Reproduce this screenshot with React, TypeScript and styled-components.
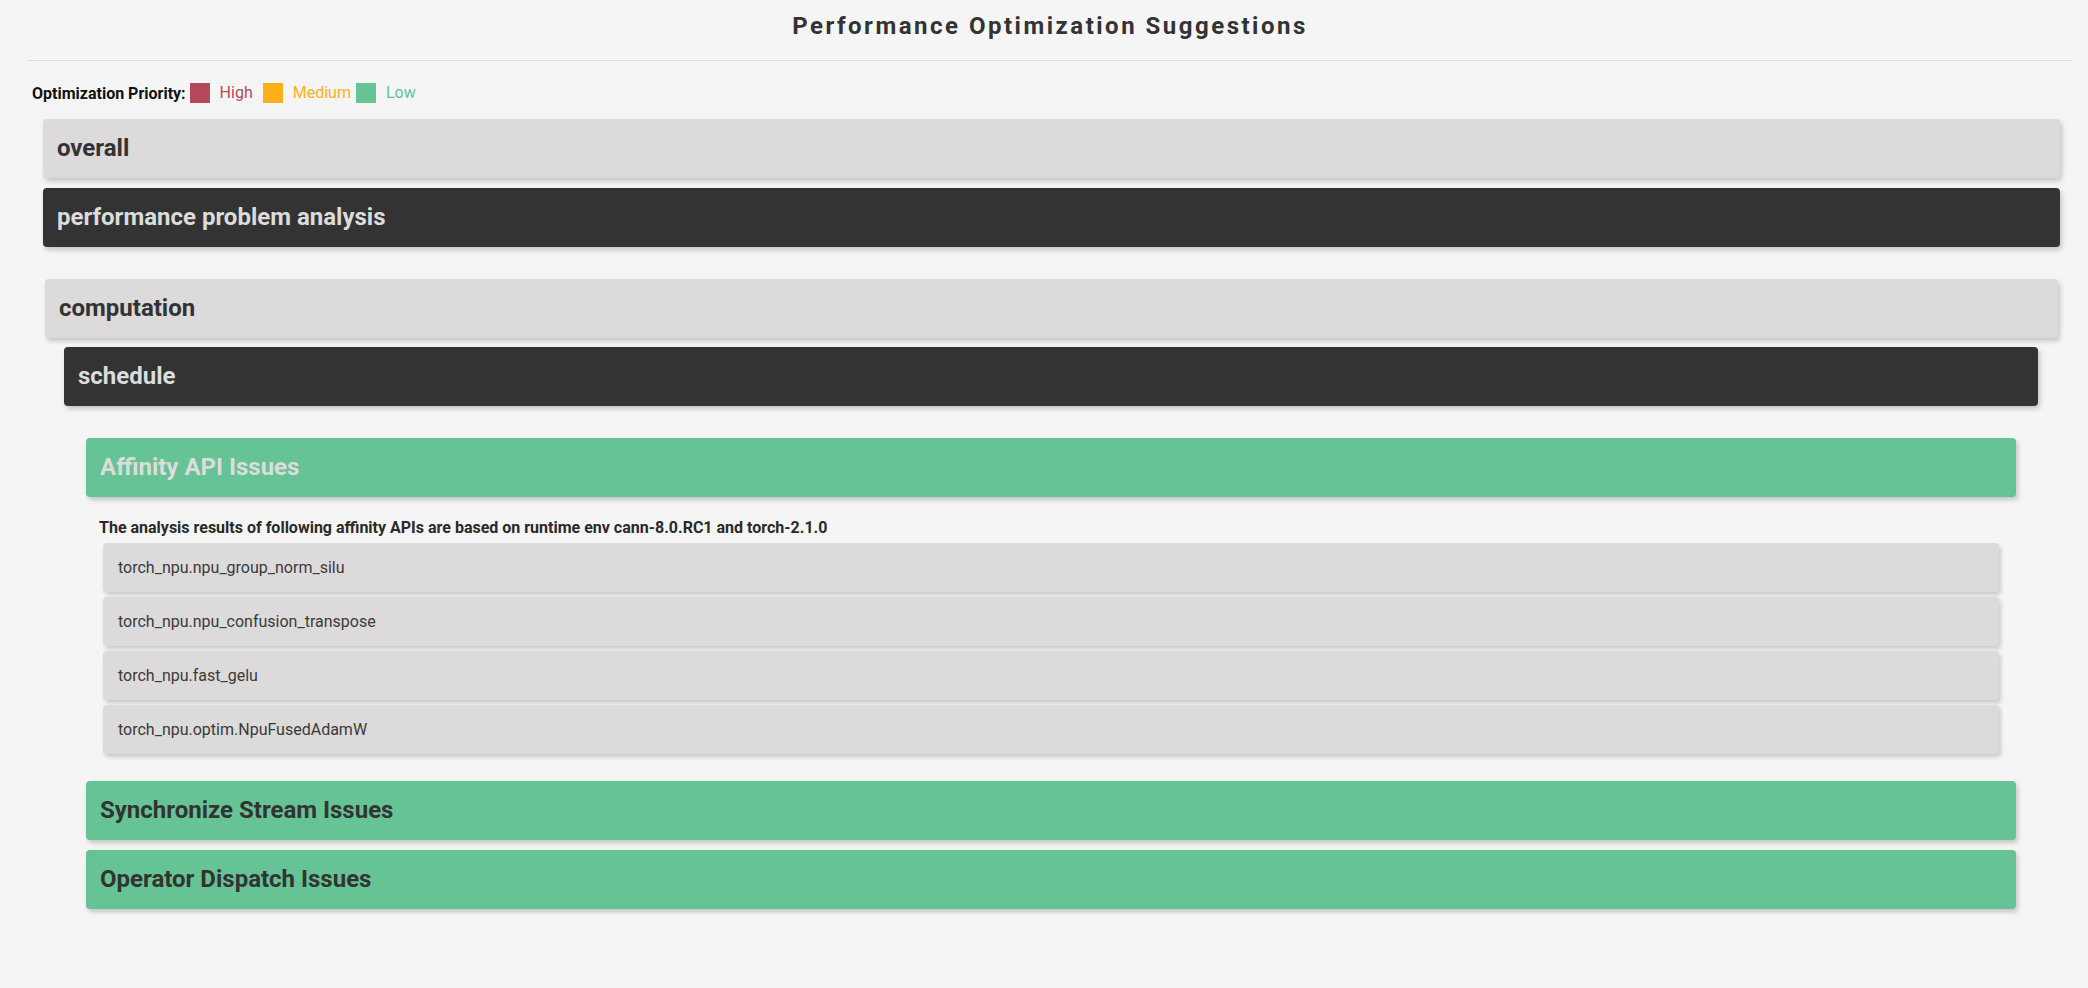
import React from "react";
import styled, { createGlobalStyle } from "styled-components";

type Tone = "light" | "dark" | "green" | "greenActive";

const GlobalStyle = createGlobalStyle`
  body {
    margin: 0;
    background: #f5f5f5;
    font-family: Roboto, "Liberation Sans", Arial, sans-serif;
    color: #333;
  }
`;

const Page = styled.div`
  padding-top: 12px;
  min-height: 976px;
`;

const Title = styled.h2`
  margin: 0 15px 0 27px;
  text-align: center;
  font-size: 24px;
  line-height: 28px;
  font-weight: 700;
  letter-spacing: 2.5px;
  color: #333;
`;

const Divider = styled.hr`
  margin: 20px 15px 0 27px;
  border: 0;
  border-top: 1px solid #dcdcdc;
  height: 0;
`;

const Legend = styled.div`
  display: flex;
  align-items: center;
  margin: 22px 0 0 32px;
  height: 20px;
  font-size: 16px;
`;

const LegendLabel = styled.span`
  font-weight: 700;
  color: #111;
  font-size: 16px;
  margin-right: 4px;
`;

const Swatch = styled.span<{ $color: string }>`
  width: 20px;
  height: 20px;
  background: ${(p) => p.$color};
  margin-right: 10px;
`;

const SwatchText = styled.span<{ $color: string; $space?: number }>`
  color: ${(p) => p.$color};
  margin-right: ${(p) => p.$space ?? 10}px;
  line-height: 20px;
`;

const Tree = styled.div`
  margin: 16px 28px 0 43px;
`;

const barColors: Record<Tone, { bg: string; fg: string }> = {
  light: { bg: "#dcdadb", fg: "#333" },
  dark: { bg: "#333333", fg: "#dcdcdc" },
  green: { bg: "#65c395", fg: "#333" },
  greenActive: { bg: "#65c395", fg: "#dcdcdc" },
};

const Bar = styled.div<{ $tone: Tone; $gap?: number }>`
  margin-top: ${(p) => p.$gap ?? 0}px;
  padding: 15px 14px;
  font-size: 24px;
  line-height: 29px;
  font-weight: 700;
  border-radius: 4px;
  background: ${(p) => barColors[p.$tone].bg};
  color: ${(p) => barColors[p.$tone].fg};
  box-shadow: 2px 3px 5px rgba(0, 0, 0, 0.2);
  cursor: pointer;
`;

const Panel = styled.div<{ $top: number; $left: number; $right: number }>`
  padding: ${(p) => `${p.$top}px ${p.$right}px 0 ${p.$left}px`};
`;

const Description = styled.div`
  margin: 21px 0 6px 13px;
  font-size: 16px;
  line-height: 19px;
  font-weight: 700;
  color: #2a2a2a;
`;

const ItemList = styled.div`
  display: flex;
  flex-direction: column;
  gap: 5px;
  padding: 0 17px;
`;

const Item = styled.div`
  padding: 0 15px;
  height: 49px;
  display: flex;
  align-items: center;
  font-size: 16px;
  color: #3a3a3a;
  background: #dcdadb;
  border-radius: 4px;
  box-shadow: 2px 3px 4px rgba(0, 0, 0, 0.18);
`;

const apis = [
  "torch_npu.npu_group_norm_silu",
  "torch_npu.npu_confusion_transpose",
  "torch_npu.fast_gelu",
  "torch_npu.optim.NpuFusedAdamW",
];

export default function App() {
  return (
    <Page>
      <GlobalStyle />
      <Title>Performance Optimization Suggestions</Title>
      <Divider />
      <Legend>
        <LegendLabel>Optimization Priority:</LegendLabel>
        <Swatch $color="#b5485a" />
        <SwatchText $color="#b5485a">High</SwatchText>
        <Swatch $color="#fdb01a" />
        <SwatchText $color="#fdb01a" $space={5}>
          Medium
        </SwatchText>
        <Swatch $color="#65c395" />
        <SwatchText $color="#65c395">Low</SwatchText>
      </Legend>
      <Tree>
        <Bar $tone="light">overall</Bar>
        <Bar $tone="dark" $gap={10}>
          performance problem analysis
        </Bar>
        <Panel $top={32} $left={2} $right={2}>
          <Bar $tone="light">computation</Bar>
          <Panel $top={9} $left={19} $right={20}>
            <Bar $tone="dark">schedule</Bar>
            <Panel $top={32} $left={22} $right={22}>
              <Bar $tone="greenActive">Affinity API Issues</Bar>
              <Description>
                The analysis results of following affinity APIs are based on runtime env cann-8.0.RC1 and
                torch-2.1.0
              </Description>
              <ItemList>
                {apis.map((api) => (
                  <Item key={api}>{api}</Item>
                ))}
              </ItemList>
              <Bar $tone="green" $gap={27}>
                Synchronize Stream Issues
              </Bar>
              <Bar $tone="green" $gap={10}>
                Operator Dispatch Issues
              </Bar>
            </Panel>
          </Panel>
        </Panel>
      </Tree>
    </Page>
  );
}
